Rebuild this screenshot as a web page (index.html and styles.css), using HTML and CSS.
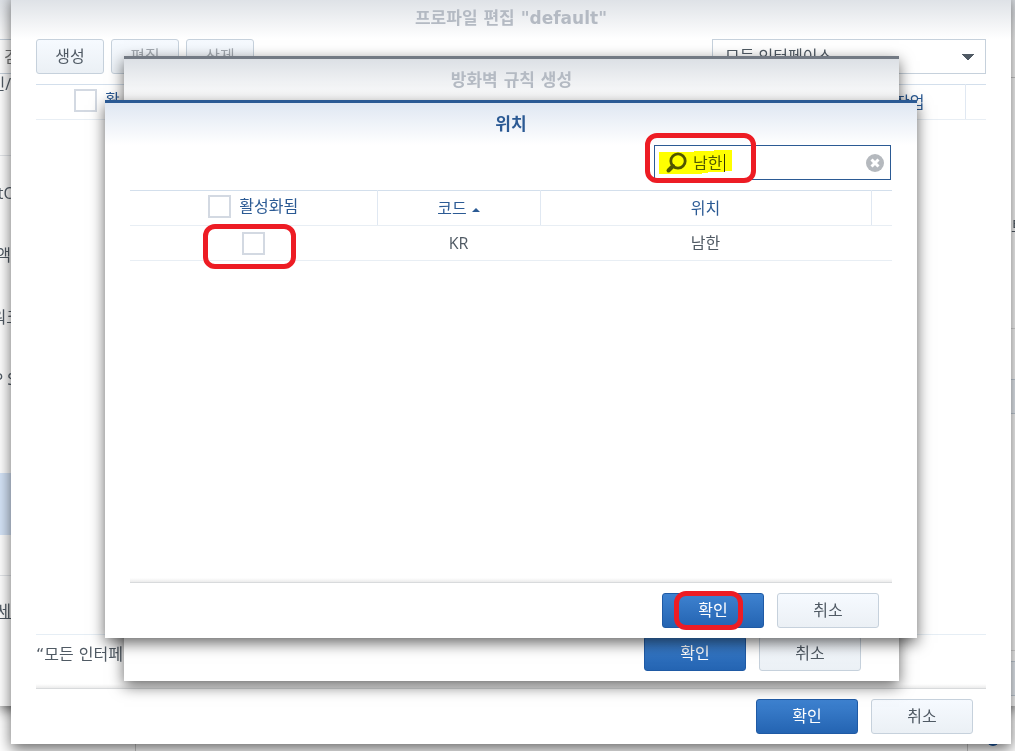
FILE: index.html
```html
<!DOCTYPE html>
<html lang="ko">
<head>
    <meta charset="UTF-8">
    <meta name="viewport" content="width=device-width, initial-scale=1.0">
    <title>방화벽</title>
    <link rel="stylesheet" href="styles.css">
</head>
<body>
    <div class="desktop">
        <div class="taskbar"><span class="dot"></span></div>

        <!-- control panel behind the dialogs -->
        <div class="panel">
            <div class="panel-nav">
                <input class="panel-search" type="text" placeholder="검" aria-label="검색">
                <div class="nav-head edge">인/</div>
                <div class="nav-line"></div>
                <ul class="nav-list">
                    <li class="near">tO</li>
                    <li class="edge">액</li>
                    <li>워크</li>
                    <li class="near">P S</li>
                    <li></li>
                    <li class="active"></li>
                </ul>
                <div class="nav-gap"></div>
                <div class="nav-more edge"><u>세</u></div>
            </div>
            <div class="panel-side">
                <div class="side-top"></div>
                <div class="side-text">트</div>
                <div class="side-button"></div>
                <div class="side-footer"><div class="side-button"></div></div>
            </div>
        </div>

        <!-- profile -->
        <section class="window profile">
            <h2 class="title">프로파일 편집 "default"</h2>
            <div class="content">
                <div class="toolbar">
                    <button class="button small">생성</button>
                    <button class="button small" disabled>편집</button>
                    <button class="button small" disabled>삭제</button>
                    <select class="select" aria-label="인터페이스">
                        <option>모든 인터페이스</option>
                    </select>
                </div>
                <table class="grid">
                    <colgroup><col><col class="col-action"><col class="col-end"></colgroup>
                    <tr>
                        <th class="first"><label><input type="checkbox">활</label></th>
                        <th>작업</th>
                        <th></th>
                    </tr>
                </table>
            </div>
            <p class="note">“모든 인터페</p>
            <div class="footer">
                <button class="button primary">확인</button>
                <button class="button">취소</button>
            </div>
        </section>

        <!-- firewall rule -->
        <section class="window rule">
            <h2 class="title">방화벽 규칙 생성</h2>
            <div class="content"></div>
            <div class="footer">
                <button class="button primary">확인</button>
                <button class="button">취소</button>
            </div>
        </section>

        <!-- location -->
        <section class="window location">
            <h2 class="title">위치</h2>
            <div class="content">
                <div class="search">
                    <svg class="glass" width="22" height="22" viewBox="0 0 22 22">
                        <circle cx="13" cy="9" r="7.2" fill="none" stroke="#50565c" stroke-width="2.8"/>
                        <path d="M8 14L3.5 18.5" stroke="#50565c" stroke-width="4" stroke-linecap="round"/>
                    </svg>
                    <input type="text" value="남한" aria-label="위치 검색">
                    <span class="caret"></span>
                    <button class="clear" aria-label="지우기">
                        <svg width="18" height="18" viewBox="0 0 18 18">
                            <circle cx="9" cy="9" r="9" fill="#b5b9be"/>
                            <path d="M5.5 5.5L12.5 12.5M12.5 5.5L5.5 12.5" stroke="#fff" stroke-width="3"/>
                        </svg>
                    </button>
                    <svg class="highlight" width="74" height="26" viewBox="0 0 74 26">
                        <path d="M0 3H35V2H55V1H73V22H65V23H49V24H43V25H0Z" fill="#ff0"/>
                    </svg>
                    <span class="mark mark-search"></span>
                </div>
                <table class="grid">
                    <colgroup><col class="col-enabled"><col class="col-code"><col><col class="col-end"></colgroup>
                    <tr>
                        <th><label><input type="checkbox">활성화됨</label></th>
                        <th>코드<span class="sort"></span></th>
                        <th>위치</th>
                        <th></th>
                    </tr>
                    <tr>
                        <td><span class="marked"><input type="checkbox" aria-label="남한 활성화"><span class="mark mark-check"></span></span></td>
                        <td>KR</td>
                        <td>남한</td>
                        <td></td>
                    </tr>
                </table>
            </div>
            <div class="footer">
                <span class="marked"><button class="button primary">확인</button><span class="mark mark-ok"></span></span>
                <button class="button">취소</button>
            </div>
        </section>
    </div>
</body>
</html>
```
FILE: styles.css
```css
* { box-sizing: border-box; }
body { margin: 0; font-family: "Open Sans", "Noto Sans CJK KR", sans-serif; font-size: 16px; line-height: 20px; color: #505a64; background-color: #fff; }
input, button, select { font: inherit; color: inherit; margin: 0; }

.desktop { position: relative; height: 100vh; min-height: 480px; overflow: hidden; }

/* BACKGROUND */
.taskbar {
    position: absolute;
    left: 135px;
    right: 47px;
    bottom: 0;
    height: 40px;
    border: 1px solid #ccc;
    border-width: 0 1px;
}
.dot { position: absolute; right: -32px; bottom: 5px; width: 12px; height: 12px; border-radius: 50%; background-color: #1c5cab; }
.panel {
    position: absolute;
    left: 0;
    right: 0;
    top: 0;
    bottom: 45px;
    display: flex;
    justify-content: space-between;
    background: linear-gradient(#dfe3e8, #fff 39px);
    box-shadow: 0 4px 12px rgba(0, 0, 0, 0.6);
}
.panel-nav { width: 21px; padding-top: 39px; }
.panel-search { display: block; width: 100%; height: 35px; padding: 0 0 0 4px; border: 1px solid #c6d1dc; border-width: 1px 0; }
.nav-head { display: flex; justify-content: flex-end; height: 22px; white-space: nowrap; }
.nav-line { height: 60px; border-bottom: 1px solid #e3e6ea; }
.nav-list { list-style: none; margin: 7px 0 0; padding: 0; }
.nav-list li { display: flex; align-items: center; justify-content: flex-end; height: 62px; padding-bottom: 3px; white-space: nowrap; }
.nav-list .active { background-color: #d5e4f8; }
.edge { width: 11px; }
.near { width: 16px; }
.nav-gap { height: 41px; border-bottom: 1px solid #e3e6ea; }
.nav-more { display: flex; align-items: center; justify-content: flex-end; height: 70px; }
.panel-side { display: flex; flex-direction: column; width: 4px; }
.side-top { height: 78px; border-bottom: 1px solid #ccc; }
.side-text { height: 251px; padding-top: 138px; border-bottom: 1px solid #ddd; }
.side-button { height: 35px; margin-top: 50px; border: 1px solid #c6d1dc; border-width: 1px 0; background-color: #eef3f9; }
.side-footer { margin-top: auto; height: 56px; border-top: 1px solid #ddd; }
.side-footer .side-button { margin-top: 10px; }

/* WINDOWS */
.window {
    position: absolute;
    display: flex;
    flex-direction: column;
    border-top: 3px solid #737a84;
    background-color: #fff;
    box-shadow: 0 5px 14px rgba(0, 0, 0, 0.6);
}
.profile { left: 11px; right: 4px; top: -6px; bottom: 7px; }
.rule { left: 124px; right: 116px; top: 56px; bottom: 70px; }
.location { left: 105px; right: 98px; top: 100px; bottom: 113px; border-top-color: #2b5a94; }
.title {
    margin: 0;
    height: 42px;
    line-height: 42px;
    text-align: center;
    font-family: "DejaVu Sans", "Noto Sans CJK KR", sans-serif;
    font-size: 17px;
    font-weight: bold;
    color: #b4bac3;
    background: linear-gradient(#dce0e5, #fff);
}
.location .title { color: #2b5a94; background: linear-gradient(#dfe7f2, #fff); }
.content { flex: 1; padding: 0 25px; }

/* BUTTONS */
.button {
    width: 102px;
    height: 35px;
    padding: 0 0 2px;
    border: 1px solid #c6d1dc;
    border-radius: 3px;
    background: linear-gradient(#f6faff, #ebf0f5);
}
.button.small { width: 68px; }
.button:disabled { color: #a3a9b0; }
.button.primary { border-color: #1f5aa5; color: #fff; background: linear-gradient(#3e82d0, #2464b2); }
.toolbar { display: flex; gap: 7px; margin-bottom: 10px; }
.select {
    width: 274px;
    height: 35px;
    margin-left: auto;
    padding: 0 12px 2px;
    border: 1px solid #c6d1dc;
    appearance: none;
    background: linear-gradient(to bottom left, #505a64 50%, transparent 50%) no-repeat right 17px top 14px / 6px 7px,
        linear-gradient(to bottom right, #505a64 50%, transparent 50%) no-repeat right 11px top 14px / 6px 7px, #fff;
}
.footer {
    position: relative;
    display: flex;
    justify-content: flex-end;
    gap: 13px;
    margin: 0 25px;
    padding: 10px 13px;
    border-top: 1px solid #d8dadc;
}
.footer::before { content: ""; position: absolute; left: 0; right: 0; top: -5px; height: 4px; background: linear-gradient(transparent, rgba(0, 0, 0, 0.08)); }
.note { margin: 0 25px; height: 54px; padding-top: 10px; border-top: 1px solid #e6eef5; font-family: "DejaVu Sans", "Noto Sans CJK KR", sans-serif; }

/* TABLES */
.grid { width: 100%; table-layout: fixed; border-collapse: collapse; }
.grid th, .grid td { height: 35px; padding: 0; text-align: center; font-weight: normal; border-bottom: 1px solid #e8eef4; }
.grid th { color: #2b5a94; border-top: 1px solid #d3dfec; border-right: 1px solid #e0e8f2; }
.grid th:last-child { border-right: none; }
.profile .grid th.first { text-align: left; padding-left: 38px; border-right: none; }
.grid label { display: inline-flex; align-items: center; gap: 8px; }
.grid input { appearance: none; width: 23px; height: 23px; border: 2px solid #d3d9e2; background-color: #fff; vertical-align: middle; }
.col-action { width: 110px; }
.col-end { width: 21px; }
.col-enabled { width: 247px; }
.col-code { width: 163px; }
.sort { display: inline-block; margin-left: 5px; border: 4px solid transparent; border-top: none; border-bottom-color: #2b5a94; vertical-align: middle; }

/* SEARCH BOX */
.search { position: relative; display: flex; align-items: center; width: 237px; height: 35px; margin: 0 1px 10px auto; padding: 0 6px 0 10px; border: 1px solid #2b5a94; background-color: #fff; }
.search input { flex: 1; min-width: 0; height: 31px; padding: 0 0 2px 6px; border: none; outline: none; background: none; }
.caret { position: absolute; left: 69px; top: 8px; width: 1px; height: 18px; background-color: #333; }
.clear { display: flex; padding: 0; border: none; background: none; }
.highlight { position: absolute; left: 4px; top: 3px; mix-blend-mode: multiply; }

/* RED MARKS */
.marked { position: relative; display: inline-block; }
.mark { position: absolute; border: 5px solid #ed1c24; border-radius: 12px; pointer-events: none; }
.mark-search { left: -10px; top: -13px; width: 111px; height: 50px; }
.mark-check { left: -39px; top: -7px; width: 93px; height: 45px; }
.mark-ok { left: 12px; top: -2px; width: 69px; height: 39px; }
```
